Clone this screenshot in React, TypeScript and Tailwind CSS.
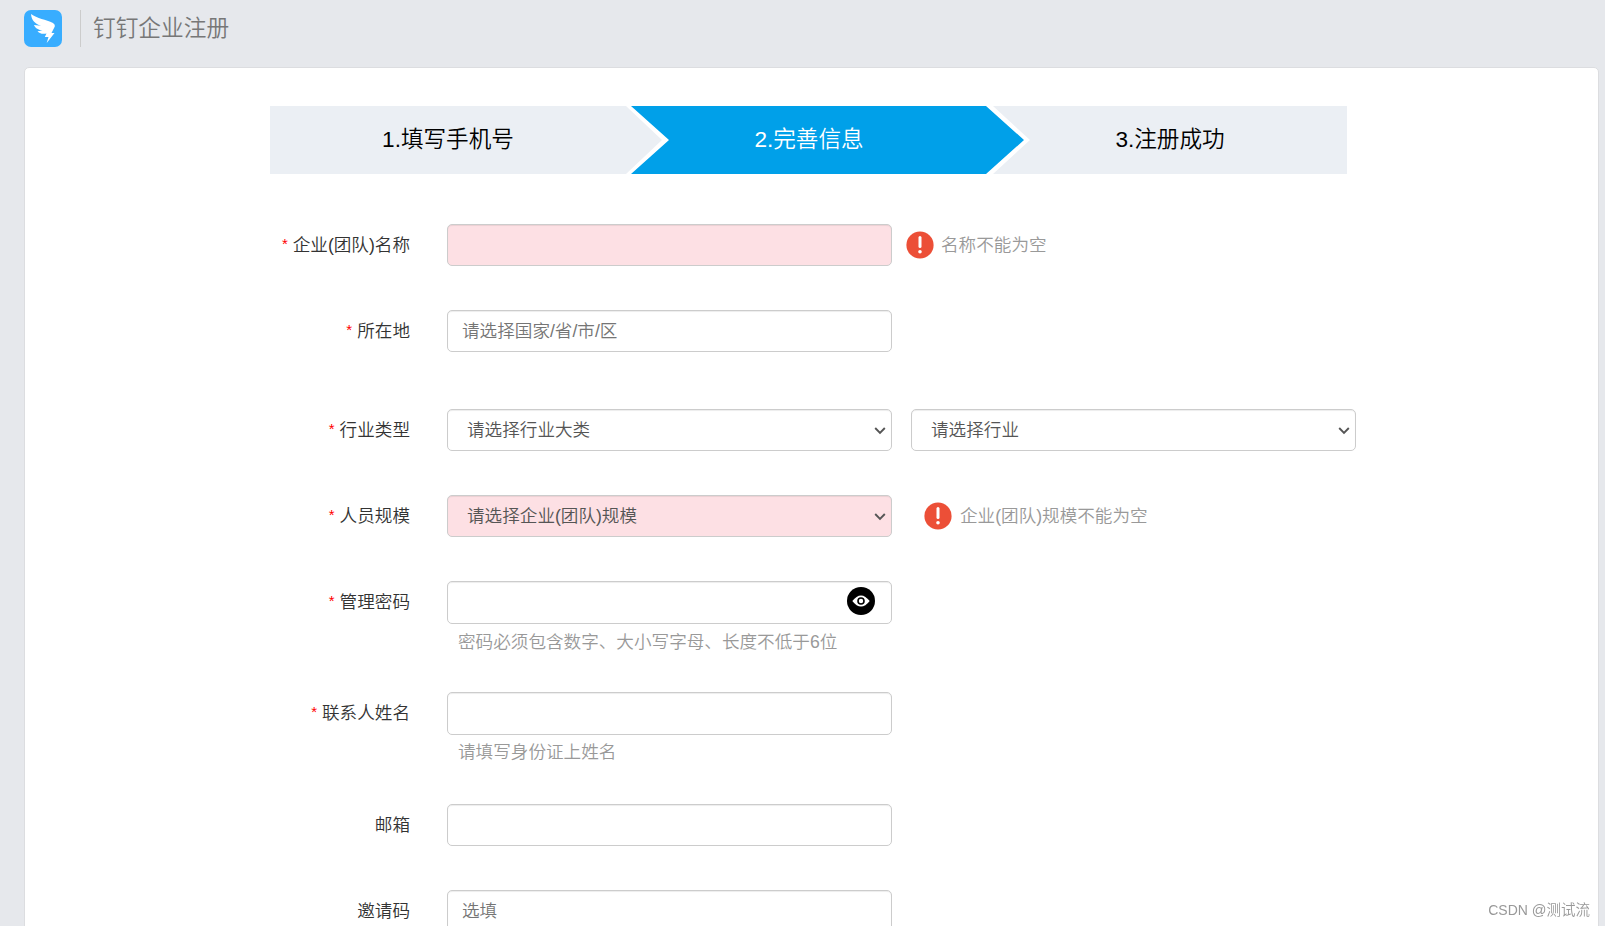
import type { ReactNode } from 'react';

function AlertIcon() {
  return (
    <svg className="size-7 shrink-0" viewBox="0 0 28 28">
      <circle cx="14" cy="14" r="13.6" fill="#ec4f37" />
      <path d="M14 6.500v9" stroke="#fff" strokeWidth="3" strokeLinecap="round" />
      <circle cx="14" cy="20.800" r="1.800" fill="#fff" />
    </svg>
  );
}

function EyeIcon() {
  return (
    <svg className="size-7" viewBox="0 0 28 28">
      <circle cx="14" cy="14" r="14" fill="#000" />
      <path d="M5.300 14Q14 2.800 22.700 14Q14 25.200 5.300 14Z" fill="#fff" />
      <circle cx="14" cy="14" r="3" fill="#fff" stroke="#000" strokeWidth="1.600" />
    </svg>
  );
}

function Logo() {
  return (
    <svg className="h-[37px] w-[38px]" viewBox="0 0 38 37">
      <rect width="38" height="37" rx="7" fill="#38adff" />
      <path
        d="M7 4C13 8.500 22 9.500 29 13Q31.500 14.500 30.800 16.500L27.500 23H30.500L22.700 33L24.500 27H20.800L22.500 23.500C18 24.500 15 23 13.500 21.200L18.500 20.500C13.500 19.800 11 17.500 10 15L17 15.800C11 13.500 7.500 10.500 7 4Z"
        fill="#fff"
      />
    </svg>
  );
}

function Chevron() {
  return (
    <svg className="mt-px h-3 w-3" viewBox="0 0 12 12" fill="none">
      <path d="M1.200 3L6 7.800L10.800 3" stroke="#555" strokeWidth="1.900" />
    </svg>
  );
}

function Row({ label, required, height, children }: { label: string; required?: boolean; height: string; children: ReactNode }) {
  return (
    <div className={`flex items-start ${height}`}>
      <div className="flex h-[42px] w-[140px] shrink-0 items-center justify-end gap-[5px] whitespace-nowrap text-[#333]">
        {required && <span className="pb-[4px] text-[15px] text-[#f00]">*</span>}
        <span>{label}</span>
      </div>
      <div className="ml-[37px] flex flex-col">{children}</div>
    </div>
  );
}

const box = 'flex w-[445px] items-center rounded-[5px] border border-[#ccc] shadow-[inset_0_1px_1px_rgba(0,0,0,0.075)]';

function Select({ text, error }: { text: string; error?: boolean }) {
  return (
    <div className={`${box} h-[42px] justify-between pl-[19px] pr-[5px] text-[#555] ${error ? 'bg-[#fde0e4]' : 'bg-white'}`}>
      <span>{text}</span>
      <Chevron />
    </div>
  );
}

export default function App() {
  return (
    <div className="h-[926px] overflow-hidden bg-[#e6e8ec] font-['Liberation_Sans','Noto_Sans_CJK_SC',sans-serif] text-[17.6px] font-[350] leading-[25px]">
      <header className="flex h-[67px] items-start pl-6 pt-[10px]">
        <Logo />
        <div className="ml-[18px] flex h-[37px] items-center border-l border-[#ccc] pl-3 text-[22.7px] text-[#777]">钉钉企业注册</div>
      </header>
      <main className="ml-6 h-[900px] w-[1575px] rounded-[5px] border border-[#dcdde0] bg-white pl-[245px] pt-[38px]">
        <div className="flex h-[68px] w-[1077px] text-[22.6px] text-black">
          <div className="flex w-[392px] items-center justify-center bg-[#ebeff4] pb-[2px] pr-9 [clip-path:polygon(0_0,356px_0,100%_50%,356px_100%,0_100%)]">1.填写手机号</div>
          <div className="-ml-[31px] flex w-[393px] items-center justify-center bg-[#00a0e9] pb-[2px] pr-[37px] text-white [clip-path:polygon(0_0,355px_0,100%_50%,355px_100%,0_100%,38px_50%)]">2.完善信息</div>
          <div className="-ml-[31px] flex w-[354px] items-center justify-center bg-[#ebeff4] pb-[2px] [clip-path:polygon(0_0,100%_0,100%_100%,0_100%,37px_50%)]">3.注册成功</div>
        </div>
        <form className="mt-[50px] flex flex-col">
          <Row label="企业(团队)名称" required height="h-[86px]">
            <div className="flex items-center">
              <div className={`${box} h-[42px] bg-[#fde0e4]`} />
              <div className="ml-[14px] flex items-center gap-[7px] text-[#999]">
                <AlertIcon />
                <span>名称不能为空</span>
              </div>
            </div>
          </Row>
          <Row label="所在地" required height="h-[99px]">
            <div className={`${box} h-[42px] pl-[14px] text-[#757575]`}>请选择国家/省/市/区</div>
          </Row>
          <Row label="行业类型" required height="h-[86px]">
            <div className="flex gap-[19px]">
              <Select text="请选择行业大类" />
              <Select text="请选择行业" />
            </div>
          </Row>
          <Row label="人员规模" required height="h-[86px]">
            <div className="flex items-center">
              <Select text="请选择企业(团队)规模" error />
              <div className="ml-8 flex items-center gap-2 text-[#999]">
                <AlertIcon />
                <span>企业(团队)规模不能为空</span>
              </div>
            </div>
          </Row>
          <Row label="管理密码" required height="h-[111px]">
            <div className={`${box} h-[43px] justify-end pb-[3px] pr-4`}>
              <EyeIcon />
            </div>
            <div className="mt-[6px] pl-[11px] text-[#999]">密码必须包含数字、大小写字母、长度不低于6位</div>
          </Row>
          <Row label="联系人姓名" required height="h-[112px]">
            <div className={`${box} h-[43px]`} />
            <div className="mt-[5px] pl-[11px] text-[#999]">请填写身份证上姓名</div>
          </Row>
          <Row label="邮箱" height="h-[86px]">
            <div className={`${box} h-[42px]`} />
          </Row>
          <Row label="邀请码" height="h-[42px]">
            <div className={`${box} h-[42px] pl-[14px] text-[#757575]`}>选填</div>
          </Row>
        </form>
      </main>
      <div className="fixed bottom-[3px] right-[15px] text-[14px] text-[#999]">
        CSDN <span className="text-[14.500px]">@测试流</span>
      </div>
    </div>
  );
}
